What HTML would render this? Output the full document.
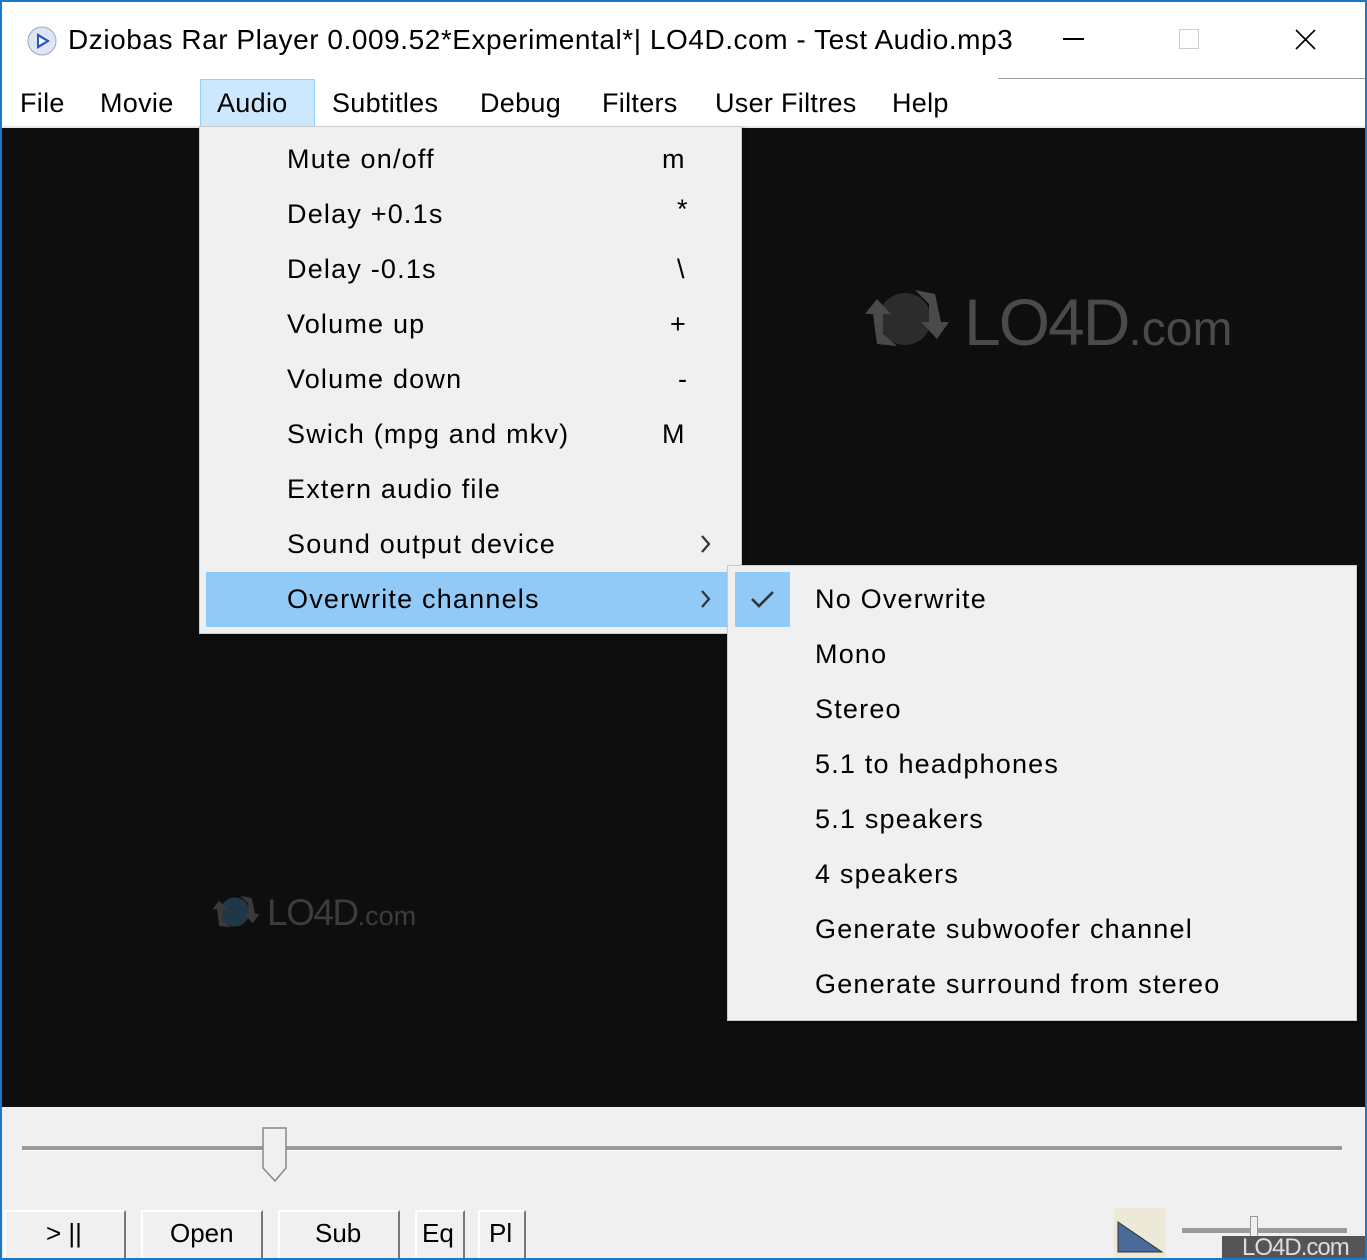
<!DOCTYPE html>
<html><head><meta charset="utf-8"><style>
*{margin:0;padding:0;box-sizing:border-box}
body{width:1367px;height:1260px;overflow:hidden;background:#1979ca;font-family:"Liberation Sans",sans-serif;position:relative}
.abs{position:absolute}
#win{left:2px;top:2px;width:1363px;height:1256px;background:#fff;overflow:hidden}
.t{position:absolute;white-space:nowrap;color:#000}
.menu{font-size:27px;top:86px;letter-spacing:0.3px}
.mi{position:absolute;font-size:27px;white-space:nowrap;color:#000;line-height:55px;letter-spacing:1.2px}
</style></head><body>
<div id="win" class="abs">
  <svg class="abs" style="left:24px;top:23px" width="32" height="32" viewBox="0 0 32 32"><circle cx="16" cy="16" r="14" fill="#dfe6f3" stroke="#9aa8c4"/><path d="M11 8 L24 16 L11 24 Z" fill="#2a55c8"/><path d="M13 12 L20 16 L13 20 Z" fill="#fff"/></svg>
  <div class="t" style="left:66px;top:22px;font-size:28px;letter-spacing:0.55px">Dziobas Rar Player 0.009.52*Experimental*| LO4D.com - Test Audio.mp3</div>
  <div class="abs" style="left:1061px;top:36px;width:21px;height:2px;background:#000"></div>
  <div class="abs" style="left:1177px;top:27px;width:20px;height:20px;border:1px solid #ccc"></div>
  <svg class="abs" style="left:1293px;top:27px" width="21" height="21"><path d="M1 1L20 20M20 1L1 20" stroke="#000" stroke-width="1.6"/></svg>
  <div class="abs" style="left:996px;top:76px;width:367px;height:1px;background:#a0a0a0"></div>
  <div class="abs" style="left:198px;top:77px;width:115px;height:48px;background:#cce8ff;border:1px solid #99d1ff"></div>
  <div class="t menu" style="left:18px">File</div>
  <div class="t menu" style="left:98px">Movie</div>
  <div class="t menu" style="left:215px">Audio</div>
  <div class="t menu" style="left:330px">Subtitles</div>
  <div class="t menu" style="left:478px">Debug</div>
  <div class="t menu" style="left:600px">Filters</div>
  <div class="t menu" style="left:713px">User Filtres</div>
  <div class="t menu" style="left:890px">Help</div>
  <div class="abs" style="left:0;top:124px;width:1363px;height:2px;background:#e8e8e8"></div>
  <div class="abs" style="left:0;top:126px;width:1363px;height:979px;background:#0e0e0e"></div>
  <svg class="abs" style="left:855px;top:282px" width="100" height="70" viewBox="0 0 100 70"><circle cx="48" cy="35" r="26" fill="#2c2c2c"/><path d="M20 15 L8 30 L16 30 L20 60 L40 62 L26 50 L26 30 L34 30Z" fill="#4a4a4a"/><path d="M80 55 L92 38 L84 38 L78 10 L58 6 L72 20 L72 38 L64 38Z" fill="#4a4a4a"/></svg>
  <div class="t" style="left:962px;top:282px;font-size:66px;color:#4a4a4a;letter-spacing:-2px">LO4D<span style="font-size:48px;letter-spacing:0px">.com</span></div>
  <svg class="abs" style="left:206px;top:890px" width="56" height="40" viewBox="0 0 100 70"><circle cx="48" cy="35" r="26" fill="#1e3848"/><path d="M20 15 L8 30 L16 30 L20 60 L40 62 L26 50 L26 30 L34 30Z" fill="#3a3a3a"/><path d="M80 55 L92 38 L84 38 L78 10 L58 6 L72 20 L72 38 L64 38Z" fill="#3a3a3a"/></svg>
  <div class="t" style="left:265px;top:890px;font-size:37px;color:#3c3c3c;letter-spacing:-1.5px">LO4D<span style="font-size:27px;letter-spacing:0">.com</span></div>
  <div class="abs" style="left:197px;top:124px;width:543px;height:508px;background:#f0f0f0;border:1px solid #ccc;box-shadow:2px 2px 3px rgba(0,0,0,.4)"></div>
  <div class="abs" style="left:204px;top:570px;width:522px;height:55px;background:#91c9f7"></div>
  <div class="mi" style="left:285px;top:130px">Mute on/off</div><div class="mi" style="left:660px;top:130px">m</div>
  <div class="mi" style="left:285px;top:185px">Delay +0.1s</div><div class="mi" style="left:675px;top:180px">*</div>
  <div class="mi" style="left:285px;top:240px">Delay -0.1s</div><div class="mi" style="left:675px;top:240px">\</div>
  <div class="mi" style="left:285px;top:295px">Volume up</div><div class="mi" style="left:668px;top:295px">+</div>
  <div class="mi" style="left:285px;top:350px">Volume down</div><div class="mi" style="left:676px;top:350px">-</div>
  <div class="mi" style="left:285px;top:405px">Swich (mpg and mkv)</div><div class="mi" style="left:660px;top:405px">M</div>
  <div class="mi" style="left:285px;top:460px">Extern audio file</div>
  <div class="mi" style="left:285px;top:515px">Sound output device</div>
  <div class="mi" style="left:285px;top:570px">Overwrite channels</div>
  <svg class="abs" style="left:697px;top:532px" width="14" height="20"><path d="M3 2L10 10L3 18" fill="none" stroke="#333" stroke-width="2.2"/></svg>
  <svg class="abs" style="left:697px;top:587px" width="14" height="20"><path d="M3 2L10 10L3 18" fill="none" stroke="#333" stroke-width="2.2"/></svg>
  <div class="abs" style="left:725px;top:563px;width:630px;height:456px;background:#f0f0f0;border:1px solid #ccc;box-shadow:2px 2px 3px rgba(0,0,0,.4)"></div>
  <div class="abs" style="left:733px;top:570px;width:55px;height:55px;background:#91c9f7"></div>
  <svg class="abs" style="left:747px;top:587px" width="28" height="22"><path d="M3 10L10 17L24 3" fill="none" stroke="#333" stroke-width="2.6"/></svg>
  <div class="mi" style="left:813px;top:570px">No Overwrite</div>
  <div class="mi" style="left:813px;top:625px">Mono</div>
  <div class="mi" style="left:813px;top:680px">Stereo</div>
  <div class="mi" style="left:813px;top:735px">5.1 to headphones</div>
  <div class="mi" style="left:813px;top:790px">5.1 speakers</div>
  <div class="mi" style="left:813px;top:845px">4 speakers</div>
  <div class="mi" style="left:813px;top:900px">Generate subwoofer channel</div>
  <div class="mi" style="left:813px;top:955px">Generate surround from stereo</div>
  <div class="abs" style="left:0;top:1105px;width:1363px;height:151px;background:#f0f0f0"></div>
  <div class="abs" style="left:20px;top:1144px;width:1320px;height:5px;background:#9a9a9a;border-bottom:1px solid #fff"></div>
  <svg class="abs" style="left:258px;top:1124px" width="30" height="58"><path d="M3 2H26V42L15 55L3 42Z" fill="#f0f0f0" stroke="#888" stroke-width="1.5"/></svg>
  <div class="abs" style="left:2px;top:1208px;width:122px;height:50px;background:#f0f0f0;border:2px solid;border-color:#fff #777 #777 #fff"></div>
  <div class="t" style="left:44px;top:1216px;font-size:26px">&gt; ||</div>
  <div class="abs" style="left:139px;top:1208px;width:122px;height:50px;border:2px solid;border-color:#fff #777 #777 #fff"></div>
  <div class="t" style="left:168px;top:1216px;font-size:26px">Open</div>
  <div class="abs" style="left:276px;top:1208px;width:122px;height:50px;border:2px solid;border-color:#fff #777 #777 #fff"></div>
  <div class="t" style="left:313px;top:1216px;font-size:26px">Sub</div>
  <div class="abs" style="left:413px;top:1208px;width:50px;height:50px;border:2px solid;border-color:#fff #777 #777 #fff"></div>
  <div class="t" style="left:420px;top:1216px;font-size:26px">Eq</div>
  <div class="abs" style="left:476px;top:1208px;width:48px;height:50px;border:2px solid;border-color:#fff #777 #777 #fff"></div>
  <div class="t" style="left:487px;top:1216px;font-size:26px">Pl</div>
  <div class="abs" style="left:1112px;top:1206px;width:52px;height:50px;background:#ece9d8"></div>
  <svg class="abs" style="left:1114px;top:1214px" width="50" height="40"><path d="M2 6L46 36H2Z" fill="#4a6a9a" stroke="#333"/></svg>
  <div class="abs" style="left:1180px;top:1226px;width:165px;height:5px;background:#9a9a9a"></div>
  <div class="abs" style="left:1248px;top:1214px;width:8px;height:40px;background:#f0f0f0;border:1px solid #999"></div>
  <div class="abs" style="left:1220px;top:1234px;width:143px;height:24px;background:#555"></div>
  <div class="t" style="left:1240px;top:1232px;font-size:24px;color:#ddd;letter-spacing:-1px">LO4D.com</div>
</div>
</body></html>
